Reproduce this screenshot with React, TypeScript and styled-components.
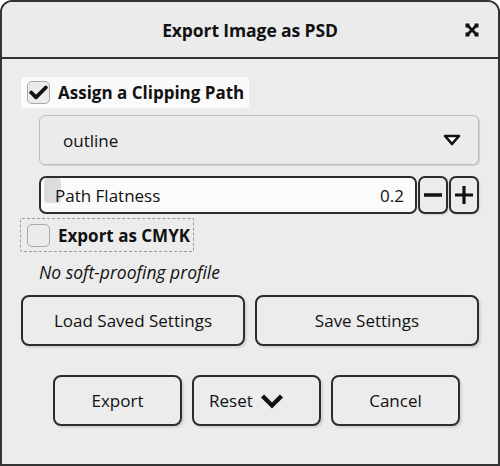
import React, { useState } from 'react';
import styled, { createGlobalStyle } from 'styled-components';

const GlobalStyle = createGlobalStyle`
  html, body {
    margin: 0;
    padding: 0;
    background: #ffffff;
  }
  body {
    font-family: 'Open Sans', 'Noto Sans', sans-serif;
    color: #111;
  }
`;

const Window = styled.div`
  box-sizing: border-box;
  width: 500px;
  height: 466px;
  border: 2px solid #333;
  border-radius: 12px 12px 0 0;
  background: #ececec;
  display: flex;
  flex-direction: column;
  overflow: hidden;
`;

const TitleBar = styled.div`
  height: 55px;
  display: grid;
  grid-template-columns: 1fr auto 1fr;
  align-items: center;
  background: #ebebeb;
  border-bottom: 2px solid #333;
`;

const Title = styled.div`
  grid-column: 2;
  font-weight: 700;
  font-size: 17.5px;
  letter-spacing: -0.1px;
`;

const CloseButton = styled.div`
  grid-column: 3;
  justify-self: end;
  margin-right: 19px;
  width: 14px;
  height: 14px;
  display: flex;
`;

const Body = styled.div`
  display: flex;
  flex-direction: column;
  padding: 18px 19px 0 19px;
`;

const CheckRow = styled.label<{ $variant: 'hover' | 'focus' }>`
  box-sizing: border-box;
  align-self: flex-start;
  display: flex;
  align-items: center;
  gap: 8px;
  height: ${(p) => (p.$variant === 'hover' ? '31px' : '34px')};
  padding: 0 ${(p) => (p.$variant === 'hover' ? '5px' : '3px')} 0 6px;
  background: ${(p) => (p.$variant === 'hover' ? '#fafafa' : 'transparent')};
  border: ${(p) => (p.$variant === 'focus' ? '1px dashed #9a9a9a' : 'none')};
  border-radius: 2px;
  font-weight: 700;
  font-size: 17px;
  margin-left: ${(p) => (p.$variant === 'hover' ? '0' : '-1px')};
`;

const Box = styled.span`
  box-sizing: border-box;
  width: 23px;
  height: 23px;
  border: 1px solid #a8a8a8;
  border-radius: 5px;
  background: #ebebeb;
  display: flex;
  align-items: center;
  justify-content: center;
`;

const Dropdown = styled.div`
  box-sizing: border-box;
  margin: 7px 0 0 18px;
  height: 50px;
  border: 1px solid #bdbdbd;
  border-radius: 6px;
  background: #ebebeb;
  box-shadow: 1px 1px 1px rgba(0, 0, 0, 0.12);
  display: flex;
  align-items: center;
  justify-content: space-between;
  padding: 0 17px 0 23px;
  font-size: 17px;
`;

const SpinRow = styled.div`
  margin: 11px 0 0 18px;
  display: flex;
  gap: 1px;
  height: 38px;
`;

const SpinField = styled.div`
  position: relative;
  box-sizing: border-box;
  flex: 1;
  border: 2px solid #2c2c2c;
  border-radius: 7px;
  background: #fbfbfb;
  display: flex;
  align-items: center;
  justify-content: space-between;
  padding: 0 11px 0 14px;
  font-size: 17px;
`;

const Fill = styled.div`
  position: absolute;
  left: 3px;
  top: 0;
  height: 25px;
  border-radius: 4px;
  background: #dcdcdc;
`;

const FieldText = styled.span`
  position: relative;
`;

const StepButton = styled.div`
  box-sizing: border-box;
  width: 30px;
  border: 2px solid #2c2c2c;
  border-radius: 7px;
  background: #ececec;
  box-shadow: 1px 1px 2px rgba(0, 0, 0, 0.12);
  display: flex;
  align-items: center;
  justify-content: center;
`;

const Note = styled.div`
  margin: 8px 0 0 18px;
  font-style: italic;
  font-size: 17.5px;
`;

const PairGrid = styled.div`
  margin: 11px 0 0 0;
  display: grid;
  grid-template-columns: 1fr 1fr;
  gap: 10px;
`;

const ActionRow = styled.div`
  margin-top: 29px;
  display: flex;
  justify-content: center;
  gap: 10px;
  padding-left: 13px;
`;

const Button = styled.button<{ $width?: number; $menu?: boolean }>`
  box-sizing: border-box;
  height: 51px;
  width: ${(p) => (p.$width ? `${p.$width}px` : 'auto')};
  border: 2px solid #2c2c2c;
  border-radius: 8px;
  background: #ececec;
  box-shadow: 2px 2px 2px rgba(0, 0, 0, 0.1);
  font-family: inherit;
  font-size: 17px;
  color: #111;
  display: flex;
  align-items: center;
  justify-content: ${(p) => (p.$menu ? 'flex-start' : 'center')};
  gap: 7px;
  padding: ${(p) => (p.$menu ? '0 0 0 15px' : '0')};
`;

const Check = () => (
  <svg width="19" height="15" viewBox="0 0 19 15">
    <path d="M2.2 7.5 L7 12.3 L16.8 2.5" fill="none" stroke="#111" strokeWidth="3.8" strokeLinecap="round" strokeLinejoin="round" />
  </svg>
);

const CloseIcon = () => (
  <svg width="14" height="14" viewBox="0 0 14 14">
    <path d="M3 3 L11 11 M11 3 L3 11" stroke="#111" strokeWidth="2.8" />
    <rect x="0.5" y="0.5" width="4" height="4" fill="#111" />
    <rect x="9.5" y="0.5" width="4" height="4" fill="#111" />
    <rect x="0.5" y="9.5" width="4" height="4" fill="#111" />
    <rect x="9.5" y="9.5" width="4" height="4" fill="#111" />
  </svg>
);

const DropArrow = () => (
  <svg width="18" height="12" viewBox="0 0 18 12">
    <path d="M2 2 H16 L9 10 Z" fill="#fff" stroke="#111" strokeWidth="2.6" strokeLinejoin="round" />
  </svg>
);

const Minus = () => (
  <svg width="20" height="20" viewBox="0 0 20 20">
    <path d="M1 10 H19" stroke="#111" strokeWidth="3.4" />
  </svg>
);

const Plus = () => (
  <svg width="20" height="20" viewBox="0 0 20 20">
    <path d="M1 10 H19 M10 1 V19" stroke="#111" strokeWidth="3.2" />
  </svg>
);

const Chevron = () => (
  <svg width="24" height="16" viewBox="0 0 24 16">
    <path d="M2.5 3 L12 12.5 L21.5 3" fill="none" stroke="#111" strokeWidth="4.4" strokeLinejoin="miter" />
  </svg>
);

function App() {
  const [clip, setClip] = useState(true);
  const [cmyk, setCmyk] = useState(false);
  const flatness = 0.2;

  return (
    <>
      <GlobalStyle />
      <Window>
        <TitleBar>
          <Title>Export Image as PSD</Title>
          <CloseButton>
            <CloseIcon />
          </CloseButton>
        </TitleBar>
        <Body>
          <CheckRow $variant="hover" onClick={() => setClip(!clip)}>
            <Box>{clip && <Check />}</Box>
            Assign a Clipping Path
          </CheckRow>
          <Dropdown>
            <span>outline</span>
            <DropArrow />
          </Dropdown>
          <SpinRow>
            <SpinField>
              <Fill style={{ width: `${flatness * 85}px` }} />
              <FieldText>Path Flatness</FieldText>
              <FieldText>{flatness}</FieldText>
            </SpinField>
            <StepButton>
              <Minus />
            </StepButton>
            <StepButton>
              <Plus />
            </StepButton>
          </SpinRow>
          <CheckRow $variant="focus" onClick={() => setCmyk(!cmyk)} style={{ marginTop: 4 }}>
            <Box>{cmyk && <Check />}</Box>
            Export as CMYK
          </CheckRow>
          <Note>No soft-proofing profile</Note>
          <PairGrid>
            <Button>Load Saved Settings</Button>
            <Button>Save Settings</Button>
          </PairGrid>
          <ActionRow>
            <Button $width={129}>Export</Button>
            <Button $width={129} $menu>
              Reset <Chevron />
            </Button>
            <Button $width={129}>Cancel</Button>
          </ActionRow>
        </Body>
      </Window>
    </>
  );
}

export default App;
